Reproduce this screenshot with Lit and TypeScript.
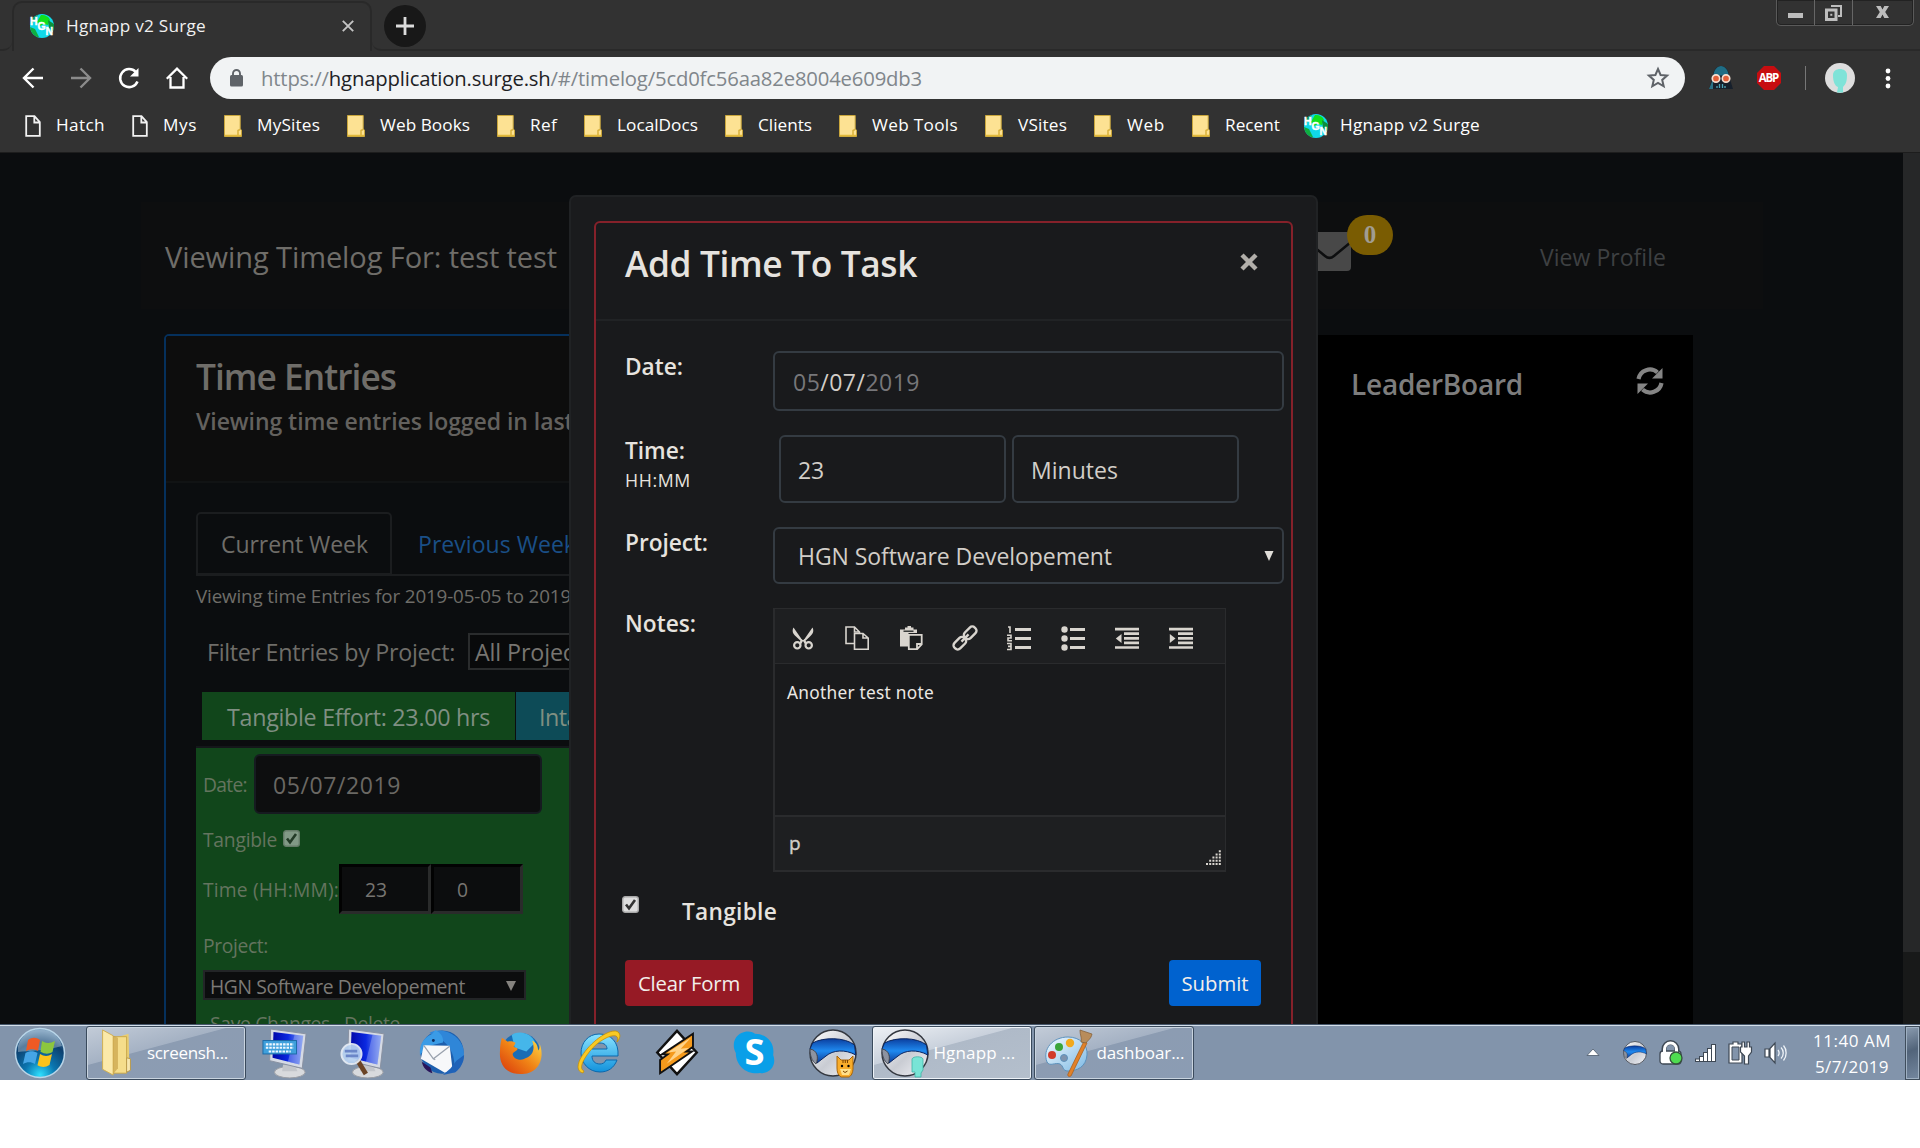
import { LitElement, html, css, svg } from "lit";
import { customElement, property } from "lit/decorators.js";

/** Inline text whose tracking is set so that it occupies a given width. */
@customElement("fit-text")
class FitText extends LitElement {
  @property({ type: Number }) w = 0;
  static styles = css`
    :host { display: inline-block; white-space: pre; flex: none; }
  `;
  render() {
    return html`<slot></slot>`;
  }
  firstUpdated() {
    const n = (this.textContent || "").length;
    const natural = this.getBoundingClientRect().width;
    if (n && this.w) this.style.letterSpacing = `${((this.w - natural) / n).toFixed(3)}px`;
  }
}

const T = (s: unknown, w: number, cls = "") => html`<fit-text class=${cls} .w=${w}>${s}</fit-text>`;

const icon = (w: number, h: number, body: unknown, vb = `0 0 ${w} ${h}`, cls = "ic") =>
  html`<svg class=${cls} width=${w} height=${h} viewBox=${vb}>${body}</svg>`;

const favicon = () => icon(24, 24, svg`
  <defs><clipPath id="fv"><circle cx="12" cy="12" r="12"/></clipPath></defs>
  <g clip-path="url(#fv)">
    <rect width="24" height="24" fill="#10d8e8"/>
    <path d="M11 1c5 0 8 2 9 5l-2 5-4-1-4 2-3-4z" fill="#12e01c"/>
    <path d="M18 6l6 4v8l-5-4z" fill="#0a8f3c"/>
    <path d="M0 13l5 2 4 8H2z" fill="#0fae3f"/>
    <path d="M0 3l8-2-3 5-5 5z" fill="#0a9a5c"/>
  </g>
  <g fill="#fff" font-family="Liberation Sans" font-weight="700" font-size="10.5" stroke="#fff" stroke-width=".4">
    <text x="0" y="11">H</text><text x="7.5" y="16">G</text><text x="15.5" y="21">N</text>
  </g>`);

const pageIcon = () => icon(16, 22, svg`<path d="M1.2 1.2h8.3l5.3 6v13.6H1.2zM9.3 1.5v6h5.4" fill="none" stroke="#f2f2f2" stroke-width="1.8"/>`);
const folderIcon = () => icon(18, 22, svg`<path d="M.5.5h15.700v13.500l1.300 1v6.500H.5z" fill="#fde293" stroke="#c9a63c"/><path d="M14 21v-5.500l2-1" fill="none" stroke="#d9b13b" stroke-width="1.500"/><path d="M1 20.500h16" stroke="#e2b93a" stroke-width="1.500"/>`);

const bookmarks: [string, string, number][] = [
  ["page", "Hatch", 49], ["page", "Mys", 34], ["folder", "MySites", 63], ["folder", "Web Books", 90],
  ["folder", "Ref", 27], ["folder", "LocalDocs", 81], ["folder", "Clients", 54], ["folder", "Web Tools", 86],
  ["folder", "VSites", 49], ["folder", "Web", 38], ["folder", "Recent", 55], ["fav", "Hgnapp v2 Surge", 140],
];

const c = "#d9d5cf";
const editorIcons = [
  svg`<g fill="none" stroke=${c} stroke-width="2.200"><circle cx="6.300" cy="19.300" r="3.200"/><circle cx="17.700" cy="19.300" r="3.200"/></g><path d="M2.500 1.500l8 11.500h3l8-11.500c1.800 3.500.4 6.500-2.500 9l-4.500 4.200 1.500 2.300-2.200 1-1.800-3-1.800 3-2.200-1 1.500-2.300L5 10.500C2 8 .7 5 2.500 1.500z" fill=${c}/><circle cx="12" cy="13" r="1.100" fill="#1c1e1f"/>`,
  svg`<g fill="none" stroke=${c} stroke-width="1.600"><path d="M9.500 17.500H1V1h8.500l5 5v2M9.500 1v5h5"/><path d="M9.500 7.500v15.700H23.200V12L18 7.500zM18 7.500V12h5"/></g>`,
  svg`<path d="M1 3.500h5V1.500h2.500V0h3.500v1.500h2.500v2h3.500V7h-8.500v13.500H1z" fill=${c}/><path d="M4.500 5.200h10" stroke="#1c1e1f" stroke-width="1.300"/><path d="M9.800 8.800h12.900v9.500l-4.500 4.900H9.800zM18 23v-5h4.600" fill="#1c1e1f" stroke=${c} stroke-width="1.800"/>`,
  svg`<g transform="rotate(-45 12 12)" fill="none" stroke=${c} stroke-width="2.400"><rect x="-2.300" y="8" width="14" height="8" rx="3.500"/><rect x="12.300" y="8" width="14" height="8" rx="3.500"/><path d="M7 12h10"/></g>`,
  svg`<path d="M8 3.500h16M8 12.500h16M8 21.500h16" stroke=${c} stroke-width="3"/><g fill="none" stroke=${c} stroke-width="1.600"><path d="M1 1h2v6"/><path d="M0 9.300h4v2.700H1v2.800h4"/><path d="M0 17.500h4v6H0M1 20.400h3"/></g>`,
  svg`<path d="M9 3.500h15M9 12.500h15M9 21.500h15" stroke=${c} stroke-width="3"/><g fill=${c}><circle cx="3.500" cy="3.500" r="3.200"/><circle cx="3.500" cy="12.500" r="3.200"/><circle cx="3.500" cy="21.500" r="3.200"/></g>`,
  svg`<path d="M0 3.200h24M9 7.700h15M9 12.300h15M9 16.800h15M0 21.500h24" stroke=${c} stroke-width="2.700"/><path d="M6.500 8v9L.8 12.500z" fill=${c}/>`,
  svg`<path d="M0 3.200h24M9 7.700h15M9 12.300h15M9 16.800h15M0 21.500h24" stroke=${c} stroke-width="2.700"/><path d="M.8 8v9l5.700-4.500z" fill=${c}/>`,
];

const check = (cls: string) => html`<svg class=${cls} width="17" height="17" viewBox="0 0 17 17"><rect x=".7" y=".7" width="15.600" height="15.600" rx="2.500" fill="#dedede" stroke="#a8a8a8" stroke-width="1.400"/><path d="M4 8.500l3 3.800L13 4" fill="none" stroke="#333" stroke-width="2.600"/></svg>`;

const helmetBody = svg`
  <defs><linearGradient id="hs" x1="0" y1="0" x2="1" y2="1"><stop offset="0" stop-color="#fff"/><stop offset=".55" stop-color="#c9ccd3"/><stop offset="1" stop-color="#f4f4f8"/></linearGradient>
  <linearGradient id="hb" x1="0" y1="0" x2="0" y2="1"><stop offset="0" stop-color="#0b3fa0"/><stop offset=".5" stop-color="#1f8af0"/><stop offset="1" stop-color="#0d3c98"/></linearGradient></defs>
  <circle cx="24" cy="24" r="23" fill="url(#hs)" stroke="#33373f" stroke-width="1.500"/>
  <path d="M3.500 14C14 8 36 8 45.500 16l1.300 10C36 20 24 21 17 27l-9 7c1-7 0-11-7-14z" fill="url(#hb)" stroke="#0a2560"/>
  <path d="M1 20c7 1 9 8 6 15C3 32 1 27 1 20z" fill="#8d93a0" stroke="#444a55"/>`;
const helmet = (size: number, extra: unknown = "") => icon(size, size, svg`${helmetBody}${extra}`, "0 0 48 48");

const cat = svg`<path d="M28 27l4 4h8l4-4v12c0 5-2 8-4 9h-8c-3-2-4-5-4-9z" fill="#f9ad2b" stroke="#a86408"/><path d="M31 40h11l-2 6h-7z" fill="#ffe08a"/><circle cx="33" cy="37" r="1.200"/><circle cx="39.500" cy="37" r="1.200"/><path d="M34 42l2 1.500 2.500-1.500M34 31v3M36.300 31v3M38.500 31v3" stroke="#7a4200" fill="none"/>`;
const head = svg`<path d="M31 30c1-3 10-3 11 0v11l-2 3v4h-6v-5h-3z" fill="#78e4d6" stroke="#3fb3a6" stroke-width=".8"/>`;

const monitor = svg`
  <defs><linearGradient id="ms" x1="0" y1="0" x2="1" y2="0"><stop offset="0" stop-color="#0006a8"/><stop offset=".5" stop-color="#0a28e0"/><stop offset="1" stop-color="#7f9cf0"/></linearGradient></defs>
  <ellipse cx="29" cy="46" rx="16" ry="6" fill="#d8dadd" stroke="#9a9da3"/>
  <path d="M22 38h12l3 7H21z" fill="#c3c6cb"/>
  <path d="M9 1l37 5-4 36-34-8z" fill="#d5dae4" stroke="#8890a0"/>
  <path d="M12 4l31 4-4 30-28-7z" fill="url(#ms)"/><path d="M34 7l9 1-4 30-12-3z" fill="#b7c6f5" opacity=".35"/>`;

const apps = {
  start: svg`<defs><radialGradient id="so" cx=".5" cy=".95" r=".9"><stop offset="0" stop-color="#2fe0ff"/><stop offset=".35" stop-color="#0b76b0"/><stop offset=".75" stop-color="#0c3f6e"/><stop offset="1" stop-color="#5a87ad"/></radialGradient></defs>
    <circle cx="26" cy="26" r="24.500" fill="url(#so)" stroke="#b9d5e8" stroke-width="1.500"/><path d="M4 19C8 6 18 2.500 26 2.500S44 6 48 19C36 23 14 24 4 25z" fill="#fff" opacity=".32"/>
    <path d="M14 13c4-3 8-3 12 0l-2 11c-4-2.500-8-2.500-12 0z" fill="#ee5a25"/><path d="M28 14c4 2.500 8 2.500 13 0l-2.500 11c-4 2.500-8 2-12-.2z" fill="#8cc63e"/><path d="M11.500 26c4-2.500 8-2.500 12 0l-2.500 11c-4-2.500-8-2.500-12 0z" fill="#45a5e6"/><path d="M26 27c4 2.500 8 2.500 12 0l-2.500 11c-4 2.500-8 2.500-12 .2z" fill="#fbc31c"/>`,
  folder: svg`<path d="M20 8l10-3 1 36-10 5z" fill="#e9cd72"/><path d="M13 8h15v38H13z" fill="#f5dd8b" stroke="#c9a74a"/><path d="M3 1l11 6v41L3 42z" fill="#fbe9a9" stroke="#d0ae4f"/><path d="M14 7l5 2v32l-5 6z" fill="#c49e45" opacity=".65"/><path d="M28 30l4 1v12l-4 2z" fill="#f7e7b0" stroke="#b99a4a"/>`,
  keyboard: svg`${monitor}<rect x="1" y="13" width="35" height="14" fill="#3fa0dc" stroke="#1d6aa5"/><path d="M4 17h29M4 20.500h29M7 24.500h23" stroke="#eef8ff" stroke-width="2.200" stroke-dasharray="2.600 1"/>`,
  magnify: svg`${monitor}<path d="M18 33l9 15" stroke="#6b4426" stroke-width="5"/><circle cx="12" cy="27" r="10.500" fill="#b9d3f2" opacity=".92" stroke="#e7eef6" stroke-width="2"/><path d="M5 24h13M6 29h13" stroke="#6b86c8" stroke-width="3"/>`,
  thunderbird: svg`<circle cx="25" cy="24" r="22.500" fill="#1d5fae"/><path d="M12 4c12-6 28 0 34 13 5 12-1 24-9 29 3-11-1-25-8-31S18 8 12 4z" fill="#2f86d8"/><path d="M18 1c6 3 9 8 8 13l-16 4-8 9C1 14 8 8 15 5z" fill="#3a9be6"/><circle cx="16" cy="12" r="1.500" fill="#0c2b5c"/><path d="M6 17l27 .500 3 25-8 3L3 31z" fill="#f7f8fa"/><path d="M6 17l10 14 17-13M16 31l2 1" fill="none" stroke="#9aa2ae" stroke-width="1.300"/><path d="M4 34l9 6 2 6C9 44 5 40 4 34z" fill="#29145a"/><path d="M26 48l8-7 6-8 8-6c0 8-4 14-9 18z" fill="#1f62b8"/>`,
  firefox: svg`<defs><linearGradient id="ff" x1="0" y1="1" x2="1" y2="0"><stop offset="0" stop-color="#d8340b"/><stop offset=".5" stop-color="#f08316"/><stop offset="1" stop-color="#ffe04a"/></linearGradient></defs><circle cx="23" cy="23" r="20" fill="#1a6db5"/><path d="M14 5c8-5 20-2 24 8l-9 9-12-4z" fill="#45b6ea"/><path d="M4 8l6 4c3-1 6 0 8 1l-2 4 4 2c0 3-5 3-5 6 1 5 9 7 13 4 8-3 10-10 7-18 4 1 6 6 6 10 2-2 2-5 1-8 6 12 2 31-17 32C9 46 1 36 2 22 2 16 3 12 4 8z" fill="url(#ff)"/>`,
  ie: svg`<defs><linearGradient id="ig" x1="0" y1="0" x2="0" y2="1"><stop offset="0" stop-color="#8be4ff"/><stop offset="1" stop-color="#1292dc"/></linearGradient></defs><path fill-rule="evenodd" d="M24 5C13 5 6 14 6 24s8 19 19 19c8 0 14-4 17-12H31c-1 3-4 4-6 4-5 0-8-3-8-8h26C44 13 36 5 24 5zM17 20c1-4 4-6 8-6s7 2 7 6z" fill="url(#ig)" stroke="#0c68ac"/><path d="M8 44C0 42 2 32 12 20 24 6 40-2 44 4c2 3 0 7-2 9 1-3 1-5-1-6-5-2-18 5-26 15C7 32 4 40 9 42z" fill="#f9c924" stroke="#c48e08" stroke-width=".8"/>`,
  winamp: svg`<path d="M24 2l21 23-21 23L3 25z" fill="#fff" stroke="#111" stroke-width="2.600"/><path d="M41 5v14l-7 5h6L6 47V33l8-6H8z" fill="#f59a1c" stroke="#111" stroke-width="2"/><path d="M39 9L14 25l9-1-10 13 24-17-9 1z" fill="#ffd388"/>`,
  skype: svg`<path d="M13 2c5-1 8 0 11 2 12 0 21 9 19 22 4 10-3 20-14 19C16 47 4 38 4 24-1 15 3 4 13 2z" fill="#0a9fe8"/><text x="23.500" y="37" font-family="Open Sans" font-weight="700" font-size="38" text-anchor="middle" fill="#fff">S</text>`,
  paint: svg`<defs><linearGradient id="pg" x1="0" y1="0" x2="1" y2="1"><stop offset="0" stop-color="#f4fbff"/><stop offset="1" stop-color="#7db9e4"/></linearGradient></defs><path d="M24 8c12 0 20 8 19 18-1 12-10 16-19 16-6 0-4-5-8-7-5-2-10 3-13-2C-2 20 9 8 24 8z" fill="url(#pg)" stroke="#5d92bd"/><circle cx="20" cy="29" r="3.500" fill="#7e93ad" stroke="#5d92bd"/><circle cx="8" cy="26" r="4" fill="#d23b2a"/><circle cx="15" cy="18" r="4" fill="#3ba53a"/><circle cx="26" cy="14" r="4.200" fill="#f1a91d"/><path d="M40 12l3 2-16 33c-2 1-4 0-3-2z" fill="#e0812a" stroke="#a85a14" stroke-width=".7"/><path d="M36 1l12 4c-1 5-4 6-6 9l-5-1c1-5-1-6-1-12z" fill="#b88c5a" stroke="#7f5b34" stroke-width=".7"/>`,
};

@customElement("app-root")
class AppRoot extends LitElement {
  static styles = css`
    :host { display: block; width: 1920px; height: 1148px; overflow: hidden; background: #fff; font-family: "Open Sans", "Noto Sans", sans-serif; }
    * { box-sizing: border-box; }
    svg { display: block; flex: none; overflow: visible; }
    .row { display: flex; align-items: center; }

    .chrome { height: 153px; background: #323232; color: #fff; border-bottom: 1px solid #1d1d1d; }
    .tabs { height: 51px; display: flex; align-items: flex-start; }
    .lead { width: 12px; height: 51px; border-bottom: 2px solid #292929; border-bottom-right-radius: 9px; }
    .tab { width: 360px; height: 50px; margin-top: 1px; border: 2px solid #292929; border-bottom: 0; border-radius: 10px 10px 0 0; display: flex; align-items: center; padding: 0 16px 0 16px; font-size: 17.200px; }
    .tab .ic { margin-top: -2px; }
    .tab .title { margin: -4px auto 0 12px; color: #f0f0f0; }
    .strip { flex: 1; height: 51px; border-bottom: 2px solid #292929; border-bottom-left-radius: 9px; display: flex; justify-content: space-between; padding: 5px 6px 0 12px; }
    .plus { width: 42px; height: 42px; border-radius: 50%; background: #181818; display: grid; place-items: center; }
    .win { display: flex; height: 26px; margin-top: -5px; border: 1px solid #5a5a5a; border-top: 0; border-radius: 0 0 5px 5px; box-shadow: inset 0 0 0 1px #222; }
    .win div { width: 38px; display: grid; place-items: center; border-right: 1px solid #666; }
    .win div:last-child { width: 60px; border: 0; }

    .bar { height: 54px; display: flex; align-items: center; padding-left: 21px; }
    .nav { display: flex; gap: 24px; width: 189px; }
    .omni { width: 1475px; height: 42px; border-radius: 21px; background: #f1f3f4; display: flex; align-items: center; padding: 0 16px 0 20px; font-size: 20.300px; color: #80868b; }
    .omni .url { margin: 0 auto 0 18px; }
    .omni b { font-weight: 400; color: #202124; }
    .ext { display: flex; align-items: center; margin-left: 23px; }
    .ext .sep { width: 1px; height: 24px; background: #777; margin: 0 19px 0 24px; }
    .abp { margin-left: 23px; }
    .dots { margin-left: 30px; margin-top: 2px; }
    .marks { height: 42px; display: flex; align-items: center; padding-left: 25px; font-size: 17.200px; line-height: 22px; color: #fff; gap: 27px; }
    .mark { display: flex; align-items: center; gap: 15px; }
    .mark fit-text { margin-top: -2px; }
    .mark.last { gap: 12px; margin-left: -3px; }

    .view { height: 871px; position: relative; overflow: hidden; background: #0b0d0f; display: flex; color: #6f6d69; }
    .page { flex: 1; padding: 49px 0 0 141px; }
    .scroll { width: 17px; background: #181919; }
    .thumb { height: 799px; background: #262728; }
    .top { width: 1622px; height: 107px; background: #0d0e0f; display: flex; align-items: center; padding: 2px 0 0 24px; font-size: 29px; }
    .mail { margin-left: 751px; position: relative; margin-top: -10px; }
    .badge { position: absolute; left: 39px; top: -17px; width: 46px; height: 40px; border-radius: 20px; background: #7a5c02; color: #a19d92; font: 700 25px/39px "Liberation Serif", serif; text-align: center; }
    .profile { margin-left: 189px; font-size: 23px; color: #3e4042; }
    .cols { display: flex; margin: 25px 0 0 23px; }
    .card { width: 1096px; height: 800px; border: 2px solid #05305c; border-radius: 5px; overflow: hidden; }
    .chead { height: 147px; background: #0d0d0d; border-bottom: 2px solid #111314; padding: 16px 0 0 30px; display: flex; flex-direction: column; align-items: flex-start; }
    .h1 { font-size: 35.300px; line-height: 48px; font-weight: 600; }
    .h2 { font-size: 23px; line-height: 30px; font-weight: 600; margin-top: 6px; color: #63615e; }
    .cbody { padding: 30px 0 0 30px; display: flex; flex-direction: column; }
    .ntabs { height: 63px; display: flex; border-bottom: 2px solid #1b1d1f; font-size: 23px; align-items: center; }
    .ntab { width: 196px; height: 63px; border: 2px solid #1b1d1f; border-radius: 5px 5px 0 0; display: flex; align-items: center; padding-left: 23px; }
    .prev { margin-left: 26px; color: #1a4f86; }
    .info { font-size: 18.800px; line-height: 24px; margin-top: 8px; }
    .filter { margin-top: 25px; height: 37px; padding-left: 11px; font-size: 23.300px; display: flex; align-items: center; }
    .fsel { margin-left: 13px; width: 230px; height: 37px; border: 2px solid #2a2c2d; background: #090a0b; padding-left: 5px; display: flex; align-items: center; color: #777571; }
    .eff { margin-top: 22px; height: 48px; padding-left: 6px; display: flex; gap: 1px; font-size: 23.300px; color: #7f8f82; }
    .eff div { display: flex; align-items: center; padding: 2px 0 0 25px; }
    .e1 { width: 313px; background: #11461b; }
    .eff .e2 { width: 300px; background: #0d4b57; padding-left: 23px; }
    .entry { margin-top: 6px; border-top: 2px solid #14171a; background: #11461b; height: 400px; padding: 6px 0 0 7px; font-size: 19.300px; color: #64745f; }
    .dark { background: #0c0d0e; color: #777571; }
    .din { width: 288px; height: 60px; margin-left: 7px; border: 2px solid #161b20; border-radius: 6px; font-size: 23px; padding: 2px 0 0 17px; color: #6a6864; display: flex; align-items: center; background: #0d0e0f; }
    .num { width: 92px; height: 50px; border: 3px solid; border-color: #020202 #2a2b2b #2a2b2b #020202; padding-left: 23px; display: flex; align-items: center; }
    .r1 { height: 60px; } .r2 { height: 30px; margin-top: 10px; } .r3 { height: 50px; margin-top: 10px; } .r4 { height: 30px; margin-top: 16px; }
    .psel { width: 323px; height: 30px; margin: 10px 0 0; border: 2px solid #232527; padding: 2px 8px 0 5px; display: flex; align-items: center; justify-content: space-between; color: #7c7a76; }
    .r6 { height: 30px; margin-top: 8px; gap: 14px; padding-left: 7px; }
    .chk { margin: -2px 0 0 6px; opacity: .55; }
    .lead-board { width: 375px; height: 800px; margin: 1px 0 0 58px; background: #000; display: flex; padding: 27px 29px 0 33px; justify-content: space-between; align-items: flex-start; font-size: 28px; line-height: 44px; font-weight: 600; color: #7d7d7d; }
    .lead-board svg { margin-top: 5px; }

    .modal { position: absolute; left: 569px; top: 42px; width: 749px; height: 900px; background: #1a1b1d; border: 2px solid #202224; border-radius: 7px; padding: 24px 23px; }
    .mcard { height: 860px; border: 2px solid #85212a; border-radius: 6px; background: #191a1c; color: #e6e3df; }
    .mhead { height: 98px; border-bottom: 2px solid #212325; padding: 16px 33px 0 29px; display: flex; justify-content: space-between; align-items: flex-start; }
    .mhead .h { font-size: 35.300px; line-height: 48px; font-weight: 600; }
    .mhead svg { margin-top: 14px; }
    .form { padding: 30px 0 0 29px; font-size: 23px; color: #d2cec8; display: flex; flex-direction: column; gap: 24px; }
    .f { display: grid; grid-template-columns: 148px 1fr; align-items: start; }
    .lab { font-weight: 600; line-height: 30px; color: #e6e3df; font-size: 22.700px; padding-top: 1px; display: flex; flex-direction: column; align-items: flex-start; }
    .sub { font-weight: 400; font-size: 17.800px; line-height: 24px; margin-top: 2px; }
    .inp { border: 2px solid #343b42; border-radius: 6px; display: flex; align-items: center; }
    .date { width: 511px; height: 60px; padding: 2px 0 0 18px; }
    .date i { font-style: normal; color: #77777a; }
    .time { width: 227px; height: 68px; padding: 2px 0 0 17px; }
    .sel { width: 511px; height: 57px; padding: 0 8px 0 23px; justify-content: space-between; }
    .pair { display: flex; gap: 6px; padding-left: 6px; }
    .ed { width: 453px; height: 264px; border: 2px solid #2a2b2d; border-right-width: 1px; border-top-width: 1px; display: flex; flex-direction: column; }
    .tools { height: 55px; background: #1e1f21; border-bottom: 1px solid #2a2b2d; display: flex; align-items: center; gap: 30px; padding: 3px 0 0 16px; }
    .text { height: 151px; padding: 17px 0 0 12px; font-size: 17.300px; line-height: 24px; color: #ebe8e4; font-family: "Noto Sans", sans-serif; }
    .stat { flex: 1; background: #1e1f21; border-top: 2px solid #2a2b2d; display: flex; justify-content: space-between; align-items: flex-end; padding: 0 4px 5px 14px; font-size: 19px; line-height: 20px; }
    .stat fit-text { margin-bottom: 12px; -webkit-text-stroke: .4px; }
    .tg { display: flex; height: 30px; margin-left: -3px; gap: 43px; font-weight: 600; color: #e6e3df; font-size: 22.700px; line-height: 32px; }
    .acts { margin-top: 10px; width: 636px; height: 46px; display: flex; justify-content: space-between; font-size: 20.300px; color: #f2eeea; }
    .btn { height: 46px; border-radius: 4px; display: grid; place-items: center; }
    .clr { width: 128px; background: #961a25; } .sb { width: 92px; background: #0062cf; }

    .task { height: 56px; background: #8294ab; border-top: 1px solid #46566a; box-shadow: inset 0 1px 0 #d4dfea; display: flex; align-items: center; color: #fff; font-size: 17px; }
    .orb { margin: 0 20px 0 14px; }
    .tbtn { width: 160px; height: 54px; border: 1px solid #3a4a5c; border-radius: 3px; box-shadow: inset 0 0 0 1px #c9d4df; background: linear-gradient(165deg, #c3ccd8 0%, #a5b2c4 40%, #8c9cb2 41%, #8b9cb3 100%); display: flex; align-items: center; flex: none; }
    .tbtn.on { background: linear-gradient(165deg, #eef1f5 0%, #c9d1dc 40%, #afbac8 41%, #b4bfcc 100%); box-shadow: inset 0 0 0 1px #eef3f8; }
    .tbtn + .tbtn { margin-left: 2px; }
    .tbtn.on svg { margin-left: 8px; }
    .tbtn.off svg { margin-left: 9px; }
    .tf { margin-left: 12px; }
    .tt1 { margin-left: 12px; }
    .tt2, .tt3 { margin-left: 4px; }
    .quick { display: flex; align-items: center; }
    .quick > div { width: 78.300px; display: grid; place-items: center; }
    .tray { margin-left: auto; display: flex; align-items: center; gap: 12px; }
    .tray svg:first-child { margin-right: 12px; }
    .clock { display: flex; flex-direction: column; align-items: center; line-height: 26px; width: 80px; margin: 2px 0 0 26px; }
    .desk { width: 15px; height: 54px; margin-left: 13px; border: 1px solid #3f4d5c; box-shadow: inset 0 0 0 1px #9fb0c2; background: linear-gradient(160deg, #8b9cb0, #52647a 45%, #74879f); }
  `;

  private chrome() {
    return html`<div class="chrome">
      <div class="tabs">
        <div class="lead"></div>
        <div class="tab">${favicon()}${T("Hgnapp v2 Surge", 140, "title")}
          ${icon(12, 12, svg`<path d="M.8.8l10.400 10.400M11.200.8L.8 11.200" stroke="#c4c4c4" stroke-width="1.900"/>`)}</div>
        <div class="strip">
          <div class="plus">${icon(18, 18, svg`<path d="M9 0v18M0 9h18" stroke="#dcdcdc" stroke-width="2.800"/>`)}</div>
          <div class="win">
            <div>${icon(16, 6, svg`<rect y="1" width="15" height="5" fill="#bdbdbd"/>`, "0 -2 16 6")}</div>
            <div>${icon(17, 17, svg`<path d="M6 2h10v10h-3" fill="none" stroke="#bdbdbd" stroke-width="2"/><rect x="1.500" y="6" width="9.500" height="9.500" fill="none" stroke="#bdbdbd" stroke-width="3"/><rect x="5.300" y="9.800" width="2" height="2" fill="#bdbdbd"/>`)}</div>
            <div>${icon(14, 13, svg`<path d="M0 0h4.700l1.800 3.600L8.300 0H13L9.200 6 13 12H8.300L6.500 8.400 4.700 12H0l3.800-6z" fill="#bdbdbd"/>`)}</div>
          </div>
        </div>
      </div>
      <div class="bar">
        <div class="nav">
          ${icon(24, 24, svg`<path d="M22 12H4M12.500 2.500L3 12l9.500 9.500" fill="none" stroke="#fff" stroke-width="2.400"/>`)}
          ${icon(24, 24, svg`<path d="M2 12h18M11.500 2.500L21 12l-9.500 9.500" fill="none" stroke="#8b8b8b" stroke-width="2.400"/>`)}
          ${icon(24, 24, svg`<path d="M20.500 15.500A9 9 0 1 1 18.800 6" fill="none" stroke="#fff" stroke-width="2.500"/><path d="M21.500 2v8.500H13z" fill="#fff"/>`)}
          ${icon(24, 24, svg`<path d="M1.800 12.700L12 2.700l10.200 10M5.500 11v10.500h13V11" fill="none" stroke="#fff" stroke-width="2.300"/>`)}
        </div>
        <div class="omni">
          ${icon(13, 18, svg`<rect y="6" width="13" height="11.500" rx="1.500" fill="#5f6368"/><path d="M3 7V4.500a3.500 3.500 0 0 1 7 0V7" fill="none" stroke="#5f6368" stroke-width="1.900"/>`)}
          ${T(html`https://<b>hgnapplication.surge.sh</b>/#/timelog/5cd0fc56aa82e8004e609db3`, 661, "url")}
          ${icon(22, 22, svg`<path d="M11 2l2.600 6 6.500.6-4.900 4.300 1.500 6.400L11 15.900l-5.700 3.400 1.500-6.400L1.900 8.600 8.400 8z" fill="none" stroke="#5f6368" stroke-width="2"/>`)}
        </div>
        <div class="ext">
          ${icon(26, 24, svg`<path d="M5 10C5 4 9 0 13 0s8 4 8 10l4 13H1z" fill="#17202c"/><path d="M5.500 9.500C5.500 4 9.500 0 13 0s7.500 4 7.500 9.500z" fill="#1f6d85"/><path d="M1 23l4-10v10z" fill="#2a7186"/><circle cx="8" cy="12.500" r="3.700" fill="#e2603a" stroke="#f4ded2" stroke-width="1.700"/><circle cx="18" cy="12.500" r="3.700" fill="#e2603a" stroke="#f4ded2" stroke-width="1.700"/><path d="M9 22v-2M11.500 22v-4M14.500 22v-4M17 22v-2" stroke="#4ea5b8" stroke-width="1.300"/>`)}
          <svg width="24" height="24" viewBox="0 0 24 24" class="abp"><path d="M7 0h10l7 7v10l-7 7H7l-7-7V7z" fill="#c70d10"/><text x="12" y="16.200" font-family="Open Sans" font-weight="700" font-size="11.500" text-anchor="middle" textLength="20.500" fill="#fff">ABP</text></svg>
          <div class="sep"></div>
          ${icon(30, 30, svg`<circle cx="15" cy="15" r="15" fill="#dedede"/><path d="M8 12c0-8 14-8 14 0 0 6-1 9-4 12v5.500h-6L13 24c-3-1-5-5-5-12z" fill="#7fe3d8"/>`)}
          ${icon(6, 22, svg`<g fill="#fff"><circle cx="3" cy="3" r="2.400"/><circle cx="3" cy="10.500" r="2.400"/><circle cx="3" cy="18" r="2.400"/></g>`, "0 0 6 22", "dots")}
        </div>
      </div>
      <div class="marks">
        ${bookmarks.map(([k, s, w]) => html`<div class="mark ${k === "fav" ? "last" : ""}">${k === "page" ? pageIcon() : k === "folder" ? folderIcon() : favicon()}${T(s, w)}</div>`)}
      </div>
    </div>`;
  }

  private page() {
    return html`<div class="page">
      <div class="top">
        ${T("Viewing Timelog For: test test", 392)}
        <div class="mail">${icon(43, 39, svg`<rect y="0" width="43" height="39" rx="4" fill="#484848"/><path d="M0 10l17 14c3 2.500 6 2.500 9 0l17-14" fill="none" stroke="#0d0e0f" stroke-width="2.500"/>`)}<div class="badge">0</div></div>
        <div class="profile">${T("View Profile", 126)}</div>
      </div>
      <div class="cols">
        <div class="card">
          <div class="chead">${T("Time Entries", 200, "h1")}${T("Viewing time entries logged in last 3 weeks", 472, "h2")}</div>
          <div class="cbody">
            <div class="ntabs"><div class="ntab">${T("Current Week", 147)}</div>${T("Previous Week", 158, "prev")}</div>
            <div class="row info">${T("Viewing time Entries for 2019-05-05 to 2019", 375)}</div>
            <div class="filter">${T("Filter Entries by Project:", 248)}<div class="fsel">${T("All Projects", 118)}</div></div>
            <div class="eff"><div class="e1">${T("Tangible Effort: 23.00 hrs", 263)}</div><div class="e2">${T("Intangible Effort", 165)}</div></div>
            <div class="entry">
              <div class="row r1">${T("Date:", 44)}<div class="din">${T("05/07/2019", 128)}</div></div>
              <div class="row r2">${T("Tangible", 74)}${check("chk")}</div>
              <div class="row r3">${T("Time (HH:MM):", 136)}<div class="num dark">${T("23", 22)}</div><div class="num dark">${T("0", 11)}</div></div>
              <div class="row r4">${T("Project:", 65)}</div>
              <div class="psel dark">${T("HGN Software Developement", 255)}${icon(10, 10, svg`<path d="M0 0h10L5 10z" fill="#85837f"/>`)}</div>
              <div class="row r6">${T("Save Changes", 120)}${T("Delete", 56)}</div>
            </div>
          </div>
        </div>
        <div class="lead-board">${T("LeaderBoard", 172)}
          ${icon(28, 28, svg`<g fill="none" stroke="#858585" stroke-width="4.200"><path d="M2.500 12A11.500 11.500 0 0 1 21.500 5.500"/><path d="M25.500 16A11.500 11.500 0 0 1 6.500 22.500"/></g><path d="M26.500 1v10.500H16zM1.500 27V16.500H12z" fill="#858585"/>`)}</div>
      </div>
    </div>
    <div class="scroll"><div class="thumb"></div></div>`;
  }

  private modal() {
    return html`<div class="modal"><div class="mcard">
      <div class="mhead">${T("Add Time To Task", 292, "h")}
        ${icon(18, 18, svg`<path d="M2 2l14 14M16 2L2 16" stroke="#b1aea9" stroke-width="4.400"/>`)}</div>
      <div class="form">
        <div class="f"><div class="lab">${T("Date:", 58)}</div>
          <div class="inp date">${T(html`<i>05</i>/07/<i>2019</i>`, 127)}</div></div>
        <div class="f"><div class="lab">${T("Time:", 60)}${T("HH:MM", 66, "sub")}</div>
          <div class="pair"><div class="inp time">${T("23", 26)}</div><div class="inp time">${T("Minutes", 87)}</div></div></div>
        <div class="f"><div class="lab">${T("Project:", 83)}</div>
          <div class="inp sel">${T("HGN Software Developement", 314)}${icon(10, 10, svg`<path d="M.5 0h9L5 10z" fill="#e0ddd8"/>`)}</div></div>
        <div class="f"><div class="lab">${T("Notes:", 71)}</div>
          <div class="ed">
            <div class="tools">${editorIcons.map((b) => icon(24, 24, b))}</div>
            <div class="text">${T("Another test note", 147)}</div>
            <div class="stat">${T("p", 12)}${icon(15, 15, svg`<g stroke="#d9d5cf" stroke-width="2" stroke-dasharray="2 1.200"><path d="M0 14h15M3.200 10.800h12M6.400 7.600h9M9.600 4.400h6M12.800 1.200h3"/></g>`)}</div>
          </div></div>
        <div class="tg">${check("")}${T("Tangible", 95)}</div>
        <div class="acts"><div class="btn clr">${T("Clear Form", 102)}</div><div class="btn sb">${T("Submit", 67)}</div></div>
      </div>
    </div></div>`;
  }

  private taskbar() {
    return html`<div class="task">
      <div class="orb">${icon(52, 52, apps.start)}</div>
      <div class="tbtn">${icon(36, 48, apps.folder, "0 0 36 50", "tf")}${T("screensh...", 81, "tt1")}</div>
      <div class="quick">
        <div>${icon(46, 50, apps.keyboard, "0 0 48 52")}</div>
        <div>${icon(46, 50, apps.magnify, "0 0 48 52")}</div>
        <div>${icon(48, 48, apps.thunderbird, "0 0 50 50")}</div>
        <div>${icon(45, 45, apps.firefox, "0 0 46 46")}</div>
        <div>${icon(47, 47, apps.ie, "0 0 47 47")}</div>
        <div>${icon(46, 47, apps.winamp, "0 0 48 50")}</div>
        <div>${icon(45, 46, apps.skype, "0 0 47 48")}</div>
        <div>${helmet(48, cat)}</div>
      </div>
      <div class="tbtn on">${helmet(48, head)}${T("Hgnapp ...", 82, "tt2")}</div>
      <div class="tbtn off">${icon(48, 48, apps.paint)}${T("dashboar...", 88, "tt3")}</div>
      <div class="tray">
        ${icon(12, 8, svg`<path d="M6 0l6 6.500H0z" fill="#fff" stroke="#4c5a6b" stroke-width=".8"/>`)}
        ${helmet(24)}
        ${icon(24, 24, svg`<path d="M5 11V8a6.500 6.500 0 0 1 13 0v3" fill="none" stroke="#3e4854" stroke-width="5"/><rect x="1" y="10" width="21" height="13" rx="3" fill="#fff" stroke="#3e4854" stroke-width="1.300"/><path d="M5.500 11V8a6 6 0 0 1 12 0v3" fill="none" stroke="#fff" stroke-width="3"/><circle cx="17" cy="17" r="6" fill="#4fdc50" stroke="#34503a" stroke-width="1.300"/>`)}
        ${icon(21, 18, svg`<g fill="#fff" stroke="#3e4854" stroke-width="1"><rect x=".5" y="15" width="4" height="2.500"/><rect x="4.500" y="12.500" width="4" height="5"/><rect x="8.500" y="8.500" width="4" height="9"/><rect x="12.500" y="4.500" width="4" height="13"/><rect x="16.500" y=".5" width="4" height="17"/></g>`)}
        ${icon(24, 24, svg`<path d="M1 3h4V1h5v2h4v19H1z" fill="#fff" stroke="#3e4854" stroke-width="1.200"/><path d="M4 6h7v13H4z" fill="#8294ab" stroke="#3e4854"/><path d="M14 1h2.500v5H19V1h2.500v5h2v5l-3 4v8h-4v-8l-4-4V6H14z" fill="#fff" stroke="#3e4854" stroke-width="1.200"/>`)}
        ${icon(22, 22, svg`<path d="M1 7h4v8H1zM6 6.500L11 1v20L6 15.500z" fill="#fff" stroke="#3e4854" stroke-width="1.200"/><path d="M14 8c1.500 2 1.500 4 0 6M17 5.500c3 3 3 8 0 11M19.500 3.500c3.500 4 3.500 11 0 15" fill="none" stroke="#eef3f8" stroke-width="1.300"/>`)}
      </div>
      <div class="clock">${T("11:40 AM", 78)}${T("5/7/2019", 74)}</div>
      <div class="desk"></div>
    </div>`;
  }

  render() {
    return html`${this.chrome()}<div class="view">${this.page()}${this.modal()}</div>${this.taskbar()}`;
  }
}
